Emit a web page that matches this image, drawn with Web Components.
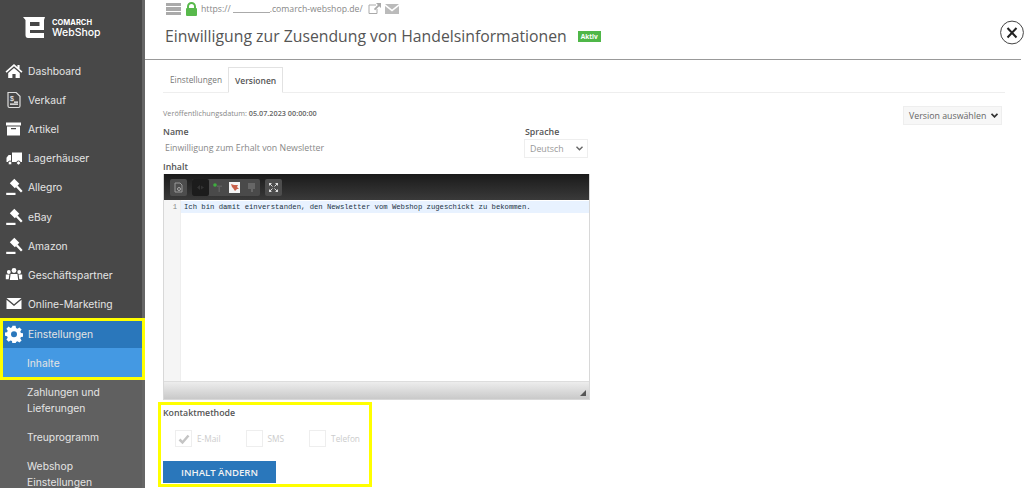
<!DOCTYPE html>
<html lang="de">
<head>
<meta charset="utf-8">
<title>Comarch WebShop</title>
<style>
html, body { margin: 0; height: 488px; overflow: hidden; background: #fff; }
body { display: flex; font-family: "Open Sans", sans-serif; color: #555; }
</style>
</head>
<body>
<side-bar></side-bar>
<main-panel></main-panel>
<script>
const GAVEL = '<path d="M9.300 .8 14.300 5.800 9.800 10.300 4.800 5.300z"/><path d="M10.800 8.900 12.400 7.300 17.600 13 16 14.600z"/><path d="M1.200 14.800h9.300v2.200H1.200z"/>';
const ICONS = {
  home: '<path d="M9 2 0.5 9.600l1.100 1.200L9 4.300l7.400 6.500 1.100-1.200L14.600 7V3h-2.200v2.100z"/><path d="M3.200 11 9 5.900l5.800 5.100V16h-4.200v-4H7.400v4H3.200z"/>',
  doc: '<path d="M3 1.500h8.200L15 5.300V15a1.500 1.500 0 0 1-1.500 1.500h-9A1.500 1.500 0 0 1 3 15z" fill="none" stroke="#ddd" stroke-width="1.200"/><path d="M5 12.600h8v1.200H5zM9 10.600h4v1.100H9z"/><text x="5" y="10" font-size="7" font-family="Liberation Sans" fill="#fff">$</text>',
  box: '<path d="M1 2.500h15v3H1z"/><path d="M2 6.500h13v9H2zM6 8v1.200h5V8z" fill-rule="evenodd"/>',
  truck: '<path d="M7 3.500h10V13H7z"/><path d="M6 6H3.600L1.500 8.800V13H6z"/><circle cx="5" cy="14" r="2" stroke="#484848"/><circle cx="13.500" cy="14" r="2" stroke="#484848"/>',
  gavel: GAVEL,
  people: '<circle cx="9" cy="4.500" r="2.400"/><circle cx="3.800" cy="6" r="1.900"/><circle cx="14.200" cy="6" r="1.900"/><path d="M5.600 8h6.800l.8 6H4.800zM.8 8.500h3.600l-.7 4.800H.8zM13.600 8.500h3.600v4.800h-2.900z"/>',
  mail: '<path d="M.5 3h15L8 9.200z" transform="translate(1 0)"/><path d="M.5 4.800 8 11l7.500-6.200V14H.5z" transform="translate(1 0)"/>',
  gear: '<path fill-rule="evenodd" d="M7.400.8h3.200l.4 2.300 1.500.6 1.900-1.300 2.200 2.200-1.300 1.900.6 1.500 2.300.4v3.200l-2.300.4-.6 1.500 1.300 1.900-2.200 2.200-1.900-1.300-1.500.6-.4 2.300H7.400L7 16.100l-1.500-.6-1.900 1.300-2.200-2.200 1.300-1.900-.6-1.500L-.2 10.800V7.600L2.100 7.200l.6-1.500L1.400 3.800 3.600 1.600l1.900 1.300L7 2.300zM9 6.200a3 3 0 1 0 0 6 3 3 0 0 0 0-6z"/>'
};

class SideBar extends HTMLElement {
  connectedCallback() {
    this.attachShadow({ mode: 'open' });
    this.shadowRoot.innerHTML = `
      <style>
        :host { display: block; box-sizing: border-box; width: 145px; height: 488px; flex: none; padding-right: 3px; background: linear-gradient(to right, #484848 142px, #666 142px); overflow: hidden; color: #e4e4e4; font: 10.3px/16px Inter, sans-serif; }
        .logo { display: flex; align-items: center; gap: 7px; height: 56px; padding: 0 0 0 23px; box-sizing: border-box; color: #fff; }
        .logo svg { width: 22px; height: 22px; flex: none; }
        .brand small { display: block; font: 700 7.500px/9px Inter, sans-serif; }
        .brand b { display: block; font: 500 10.500px/12px Inter, sans-serif; }
        .hl { position: relative; display: block; }
        .hl::after { content: ""; position: absolute; inset: -1px -3px -3px 0; border: 3px solid #ffff00; pointer-events: none; }
        .sub { background: #606060; }
      </style>
      <div class="logo">
        <svg viewBox="0 0 22 22"><path fill="#fff" fill-rule="evenodd" d="M0 0H22L21 3V13H7v3H21V21H5Q2.500 21 2.500 18V3ZM7 5H16.500V9H7Z"/></svg>
        <div class="brand"><small>COMARCH</small><b>WebShop</b></div>
      </div>
      <menu-item icon="home">Dashboard</menu-item>
      <menu-item icon="doc">Verkauf</menu-item>
      <menu-item icon="box">Artikel</menu-item>
      <menu-item icon="truck">Lagerhäuser</menu-item>
      <menu-item icon="gavel">Allegro</menu-item>
      <menu-item icon="gavel">eBay</menu-item>
      <menu-item icon="gavel">Amazon</menu-item>
      <menu-item icon="people">Geschäftspartner</menu-item>
      <menu-item icon="mail">Online-Marketing</menu-item>
      <div class="hl">
        <menu-item icon="gear" style="background:#2a77bb">Einstellungen</menu-item>
        <menu-item style="background:#4499e3">Inhalte</menu-item>
      </div>
      <div class="sub">
        <menu-item>Zahlungen und Lieferungen</menu-item>
        <menu-item>Treuprogramm</menu-item>
        <menu-item>Webshop Einstellungen</menu-item>
      </div>
    `;
  }
}

class MenuItem extends HTMLElement {
  connectedCallback() {
    const icon = this.getAttribute('icon');
    this.attachShadow({ mode: 'open' });
    this.shadowRoot.innerHTML = `
      <style>
        :host { display: flex; align-items: flex-start; padding: 6.620px 10px 6.620px ${icon ? 5 : 27}px; }
        svg { width: 18px; height: 18px; flex: none; margin: -1px 5px -1px 0; fill: #fff; }
      </style>
      ${icon ? `<svg viewBox="0 0 18 18">${ICONS[icon]}</svg>` : ''}
      <span><slot></slot></span>
    `;
  }
}

class EditorBox extends HTMLElement {
  connectedCallback() {
    this.attachShadow({ mode: 'open' });
    this.shadowRoot.innerHTML = `
      <style>
        :host { display: flex; flex-direction: column; width: 427px; height: 226px; box-sizing: border-box; border: 1px solid #d8d8d8; border-top: 0; }
        .bar { display: flex; align-items: center; gap: 5px; height: 26px; flex: none; padding-left: 6px; background: linear-gradient(#1a1a1a, #3a3a3a); box-sizing: border-box; }
        .btn { width: 17px; height: 17px; background: #4d4d4d; border-radius: 2px; display: flex; align-items: center; justify-content: center; }
        .btn svg { width: 11px; height: 11px; }
        .group { display: flex; height: 17px; background: #4a4a4a; border-radius: 2px; }
        .group .btn { background: none; }
        .group .btn.off { background: #1c1c1c; }
        .body { flex: 1; display: flex; min-height: 0; font: 7.230px/12px "Liberation Mono", monospace; color: #234; }
        .gutter { width: 17px; flex: none; background: #f5f5f5; border-right: 1px solid #eee; box-sizing: border-box; text-align: right; padding-right: 3px; color: #888; padding-top: 1px; }
        .code { flex: 1; padding-top: 1px; }
        .line { background: #e8f2ff; padding-left: 3px; }
        .status { height: 18px; flex: none; background: linear-gradient(#ededed, #c9c9c9); border-top: 1px solid #ddd; box-sizing: border-box; display: flex; justify-content: flex-end; align-items: flex-end; padding: 0 3px 3px 0; }
        .grip { width: 0; height: 0; border-left: 6px solid transparent; border-bottom: 6px solid #555; }
      </style>
      <div class="bar">
        <div class="btn"><svg viewBox="0 0 11 11"><path fill="none" stroke="#999" d="M2 1h5l2 2v7H2z"/><circle cx="6" cy="7" r="1.500" fill="none" stroke="#aaa"/></svg></div>
        <div class="group">
          <div class="btn off"><svg viewBox="0 0 11 11"><path fill="#333" d="M5 3v5L2 5.500zM6 3.500 9 5.500 6 7.500z"/></svg></div>
          <div class="btn"><svg viewBox="0 0 11 11"><circle cx="3" cy="3" r="1.800" fill="#3fae3f"/><path fill="#5e5e5e" d="M5 3.500h5V5H8v5H6.500V5H5z"/></svg></div>
          <div class="btn"><svg viewBox="0 0 11 11"><path fill="#f4f4f4" d="M0 0h11v11H0z"/><path fill="#c9604a" d="M2 2l3 1 4 0-1 2 2 2-2 0-2 2-2-3-1-1z"/></svg></div>
          <div class="btn"><svg viewBox="0 0 11 11"><path fill="#666" d="M2 1h7v6H7v3H5V7H2z"/></svg></div>
        </div>
        <div class="btn"><svg viewBox="0 0 11 11"><path fill="#ddd" d="M1 1h3L1 4zM10 1v3L7 1zM1 10V7l3 3zM10 10H7l3-3z"/><path stroke="#ddd" d="M2 2l2.500 2.500M9 2 6.500 4.500M2 9l2.500-2.500M9 9 6.500 6.500"/></svg></div>
      </div>
      <div class="body">
        <div class="gutter">1</div>
        <div class="code"><div class="line"><slot></slot></div></div>
      </div>
      <div class="status"><div class="grip"></div></div>
    `;
  }
}

class CheckOption extends HTMLElement {
  connectedCallback() {
    const on = this.hasAttribute('checked');
    this.attachShadow({ mode: 'open' });
    this.shadowRoot.innerHTML = `
      <style>
        :host { display: flex; align-items: center; gap: 5px; color: #ccc; font-size: 8.300px; }
        .box { width: 17px; height: 17px; box-sizing: border-box; border: 1px solid #eee; display: flex; align-items: center; justify-content: center; }
        svg { width: 12px; height: 12px; }
      </style>
      <span class="box">${on ? '<svg viewBox="0 0 12 12"><path fill="none" stroke="#c4c4c4" stroke-width="2.500" d="M1.500 6.500l3 3 6-7"/></svg>' : ''}</span>
      <span><slot></slot></span>
    `;
  }
}

class FakeSelect extends HTMLElement {
  connectedCallback() {
    this.attachShadow({ mode: 'open' });
    this.shadowRoot.innerHTML = `
      <style>
        :host { display: flex; align-items: center; justify-content: space-between; box-sizing: border-box; height: 19px; border: 1px solid #eee; color: var(--sel-color, #999); font-size: 8.800px; padding: 0 4px 0 5px; white-space: nowrap; }
        svg { width: 7px; height: 5px; margin-left: 5px; flex: none; }
      </style>
      <span><slot></slot></span>
      <svg viewBox="0 0 7 5"><path fill="none" stroke="var(--chev, #666)" stroke-width="var(--chev-w, 1.400)" d="M.5.800 3.500 3.800 6.500.800"/></svg>
    `;
  }
}

class MainPanel extends HTMLElement {
  connectedCallback() {
    this.attachShadow({ mode: 'open' });
    this.shadowRoot.innerHTML = `
      <style>
        :host { display: flex; flex-direction: column; flex: 1; height: 488px; min-width: 0; padding-right: 3px; overflow: hidden; font-size: 9px; }
        .top { height: 60px; box-sizing: border-box; border-bottom: 1px solid #999; padding-left: 21px; flex: none; position: relative; }
        .url { display: flex; align-items: center; gap: 3px; height: 17px; font-size: 8.700px; color: #888; }
        .url i { display: inline-block; width: 37px; border-bottom: 1px solid #aaa; height: 7px; margin: 0 -3px 0 -1px; }
        .burger { width: 15px; height: 12px; margin-right: 1px; background: repeating-linear-gradient(#aaa 0 3px, transparent 3px 4.500px); }
        .title { display: flex; align-items: center; gap: 11px; height: 20px; margin-top: 9px; margin-left: -1px; }
        h1 { margin: 0; font: 400 15.780px/20px "Open Sans", sans-serif; color: #555; white-space: nowrap; }
        .badge { background: #4fb748; color: #fff; font-size: 6.500px; font-weight: 700; line-height: 11px; padding: 0 3px; }
        .close { position: absolute; right: -3px; top: 20px; }
        .tabs { display: flex; height: 25px; margin: 7px 16px 0 18px; border-bottom: 1px solid #eee; flex: none; }
        .tab { display: flex; align-items: center; padding: 0 6px 0 7px; font-size: 8.300px; color: #777; }
        .tab.on { border: 1px solid #e2e2e2; border-bottom: 1px solid #fff; margin-bottom: -1px; color: #555; font-weight: 600; font-size: 8.500px; padding: 0 6px; }
        .content { position: relative; padding: 0 0 0 18px; flex: 1; }
        .date { font-size: 7.280px; color: #888; height: 13px; line-height: 13px; padding-top: 14px; margin-bottom: 6px; }
        .date b { font-weight: 600; color: #666; }
        .ver { position: absolute; top: 13px; right: 19px; width: 99px; --sel-color: #666; --chev: #333; --chev-w: 1.800; background: #f7f7f7; }
        .row { display: flex; margin-top: 1px; height: 34px; }
        .name { width: 362px; }
        .lbl { font-weight: 600; font-size: 8.800px; line-height: 12px; color: #555; }
        .val { padding: 4px 0 0 2px; color: #888; font-size: 8.800px; line-height: 13px; }
        .lang fake-select { width: 64px; margin-left: -1px; margin-top: 1px; }
        .ink { margin-top: 1px; height: 13px; }
        .contact { position: relative; width: 214px; height: 85px; box-sizing: border-box; margin: 2px 0 0 -5px; padding: 6px 0 0 5px; }
        .contact::after { content: ""; position: absolute; inset: 0; border: 3px solid #ffff00; pointer-events: none; }
        .contact .lbl { line-height: 11px; }
        .checks { display: flex; gap: 25px; padding-left: 12px; margin-top: 11px; height: 17px; }
        .go { display: flex; align-items: center; justify-content: center; width: 113px; height: 22px; margin-top: 14px; background: #2a77bb; color: #f2f2f2; font-size: 9.600px; font-weight: 600; }
      </style>
      <div class="top">
        <div class="url">
          <span class="burger"></span>
          <svg width="13" height="14" viewBox="0 0 13 14"><path fill="none" stroke="#58b94c" stroke-width="2" d="M3 7V4.500a3.500 3.500 0 0 1 7 0V7"/><rect x="1" y="6" width="11" height="8" rx="1" fill="#58b94c"/></svg>
          <span>https://</span><i></i><span>.comarch-webshop.de/</span>
          <svg width="13" height="11" viewBox="0 0 13 11" style="margin-left:2px"><path fill="none" stroke="#aaa" d="M8 2H1v8.500h8V6"/><path fill="#aaa" d="M8 0h5v5l-1.800-1.800-4 4-1.300-1.300 4-4z"/></svg>
          <svg width="14" height="10" viewBox="0 0 14 10" style="margin-left:1px"><path fill="#bbb" d="M0 0h14L7 5.500zM0 2l7 5.500L14 2v8H0z"/></svg>
        </div>
        <div class="title"><h1>Einwilligung zur Zusendung von Handelsinformationen</h1><span class="badge">Aktiv</span></div>
        <svg class="close" width="24" height="25" viewBox="0 0 24 25"><circle cx="12" cy="12.500" r="11.400" fill="none" stroke="#444"/><path fill="none" stroke="#222" stroke-width="2" d="M7.500 8l9 9.500M16.500 8l-9 9.500"/></svg>
      </div>
      <div class="tabs">
        <div class="tab">Einstellungen</div>
        <div class="tab on">Versionen</div>
      </div>
      <div class="content">
        <div class="date">Veröffentlichungsdatum: <b>05.07.2023 00:00:00</b></div>
        <fake-select class="ver">Version auswählen</fake-select>
        <div class="row">
          <div class="name"><div class="lbl">Name</div><div class="val">Einwilligung zum Erhalt von Newsletter</div></div>
          <div class="lang"><div class="lbl">Sprache</div><fake-select>Deutsch</fake-select></div>
        </div>
        <div class="lbl ink">Inhalt</div>
        <editor-box>Ich bin damit einverstanden, den Newsletter vom Webshop zugeschickt zu bekommen.</editor-box>
        <div class="contact">
          <div class="lbl">Kontaktmethode</div>
          <div class="checks">
            <check-option checked>E-Mail</check-option>
            <check-option>SMS</check-option>
            <check-option>Telefon</check-option>
          </div>
          <div class="go">INHALT ÄNDERN</div>
        </div>
      </div>
    `;
  }
}

customElements.define('menu-item', MenuItem);
customElements.define('check-option', CheckOption);
customElements.define('fake-select', FakeSelect);
customElements.define('editor-box', EditorBox);
customElements.define('side-bar', SideBar);
customElements.define('main-panel', MainPanel);
</script>
</body>
</html>
